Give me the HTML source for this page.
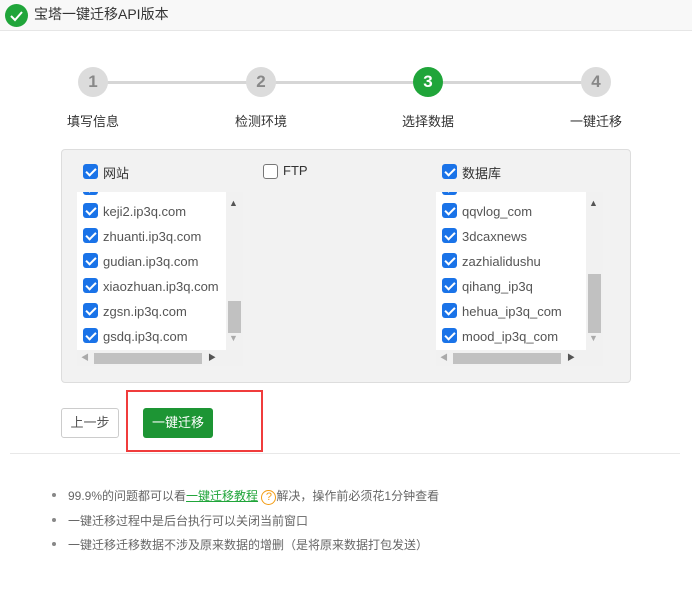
<!DOCTYPE html>
<html><head><meta charset="utf-8"><style>
*{margin:0;padding:0;box-sizing:border-box}
body{width:692px;height:590px;background:#fff;font-family:"Liberation Sans","Noto Sans CJK SC",sans-serif;position:relative;overflow:hidden;color:#333}
.a{position:absolute}
.hdr{left:0;top:0;width:692px;height:31px;background:#f8f8f8;border-bottom:1px solid #e6e6e6}
.circ{width:30px;height:30px;border-radius:50%;background:#dcdcdc;color:#888;font-weight:bold;font-size:17px;text-align:center;line-height:30px}
.lbl{font-size:13px;color:#333;top:111px;width:80px;text-align:center}
.cb{width:15px;height:15px;border-radius:3px;background:#1a73e8;}
.cb::after{content:"";position:absolute;left:4.5px;top:1.5px;width:4px;height:8px;border:solid #fff;border-width:0 2px 2px 0;transform:rotate(45deg)}
.cbe{width:15px;height:15px;border-radius:3px;border:1px solid #777;background:#fff}
.vs{background:#f1f1f1;width:17px}
.li{font-size:13px;color:#555}
.box{overflow:hidden}
</style></head><body>
<div class="a hdr"></div>
<div class="a" style="left:5px;top:4px;width:23px;height:23px;border-radius:50%;background:#20a53a"></div>
<svg class="a" style="left:5px;top:4px" width="23" height="23"><path d="M6 12l4 4 7-8" stroke="#fff" stroke-width="2" fill="none"/></svg>
<div class="a" style="left:34px;top:4px;font-size:14px;color:#333">宝塔一键迁移API版本</div>

<div class="a" style="left:93px;top:81px;width:503px;height:3px;background:#d6d6d6"></div>
<div class="a circ" style="left:78px;top:67px">1</div>
<div class="a circ" style="left:246px;top:67px">2</div>
<div class="a circ" style="left:413px;top:67px;background:#20a53a;color:#fff">3</div>
<div class="a circ" style="left:581px;top:67px">4</div>
<div class="a lbl" style="left:53px">填写信息</div>
<div class="a lbl" style="left:221px">检测环境</div>
<div class="a lbl" style="left:388px">选择数据</div>
<div class="a lbl" style="left:556px">一键迁移</div>

<div class="a" style="left:61px;top:149px;width:570px;height:234px;background:#f2f2f2;border:1px solid #ddd;border-radius:4px"></div>
<div class="a cb" style="left:83px;top:164px"></div><div class="a" style="left:103px;top:163px;font-size:13px">网站</div>
<div class="a cbe" style="left:263px;top:164px"></div><div class="a" style="left:283px;top:163px;font-size:13px">FTP</div>
<div class="a cb" style="left:442px;top:164px"></div><div class="a" style="left:462px;top:163px;font-size:13px">数据库</div>

<div class="a box" style="left:77px;top:192px;width:166px;height:174px;background:#fff">
 <div class="a cb" style="left:6px;top:-12px"></div>
 <div class="a vs" style="left:149px;top:0;height:158px"></div>
 <div class="a" style="left:151px;top:109px;width:13px;height:32px;background:#c1c1c1"></div>
 <div class="a" style="left:152px;top:6px;font-size:9px;color:#555">▲</div>
 <div class="a" style="left:152px;top:141px;font-size:9px;color:#aaa">▼</div>
 <div class="a" style="left:0;top:158px;width:166px;height:16px;background:#f1f1f1"></div>
 <div class="a" style="left:17px;top:161px;width:108px;height:11px;background:#c1c1c1"></div>
 <div class="a" style="left:4px;top:160px;font-size:8px;color:#aaa">◀</div>
 <div class="a" style="left:131px;top:160px;font-size:8px;color:#555">▶</div>
 <div class="a cb" style="left:6px;top:11px"></div><div class="a li" style="left:26px;top:12px">keji2.ip3q.com</div>
 <div class="a cb" style="left:6px;top:36px"></div><div class="a li" style="left:26px;top:37px">zhuanti.ip3q.com</div>
 <div class="a cb" style="left:6px;top:61px"></div><div class="a li" style="left:26px;top:62px">gudian.ip3q.com</div>
 <div class="a cb" style="left:6px;top:86px"></div><div class="a li" style="left:26px;top:87px">xiaozhuan.ip3q.com</div>
 <div class="a cb" style="left:6px;top:111px"></div><div class="a li" style="left:26px;top:112px">zgsn.ip3q.com</div>
 <div class="a cb" style="left:6px;top:136px"></div><div class="a li" style="left:26px;top:137px">gsdq.ip3q.com</div>
</div>

<div class="a box" style="left:436px;top:192px;width:167px;height:174px;background:#fff">
 <div class="a cb" style="left:6px;top:-12px"></div>
 <div class="a vs" style="left:150px;top:0;height:158px"></div>
 <div class="a" style="left:152px;top:82px;width:13px;height:59px;background:#c1c1c1"></div>
 <div class="a" style="left:153px;top:6px;font-size:9px;color:#555">▲</div>
 <div class="a" style="left:153px;top:141px;font-size:9px;color:#aaa">▼</div>
 <div class="a" style="left:0;top:158px;width:167px;height:16px;background:#f1f1f1"></div>
 <div class="a" style="left:17px;top:161px;width:108px;height:11px;background:#c1c1c1"></div>
 <div class="a" style="left:4px;top:160px;font-size:8px;color:#aaa">◀</div>
 <div class="a" style="left:131px;top:160px;font-size:8px;color:#555">▶</div>
 <div class="a cb" style="left:6px;top:11px"></div><div class="a li" style="left:26px;top:12px">qqvlog_com</div>
 <div class="a cb" style="left:6px;top:36px"></div><div class="a li" style="left:26px;top:37px">3dcaxnews</div>
 <div class="a cb" style="left:6px;top:61px"></div><div class="a li" style="left:26px;top:62px">zazhialidushu</div>
 <div class="a cb" style="left:6px;top:86px"></div><div class="a li" style="left:26px;top:87px">qihang_ip3q</div>
 <div class="a cb" style="left:6px;top:111px"></div><div class="a li" style="left:26px;top:112px">hehua_ip3q_com</div>
 <div class="a cb" style="left:6px;top:136px"></div><div class="a li" style="left:26px;top:137px">mood_ip3q_com</div>
</div>

<div class="a" style="left:61px;top:408px;width:58px;height:30px;border:1px solid #ccc;border-radius:3px;font-size:13px;color:#555;text-align:center;line-height:28px">上一步</div>
<div class="a" style="left:143px;top:408px;width:70px;height:30px;background:#1d9534;border-radius:3px;font-size:13px;color:#fff;text-align:center;line-height:30px">一键迁移</div>
<div class="a" style="left:126px;top:390px;width:137px;height:62px;border:2px solid #f03c3c"></div>
<div class="a" style="left:10px;top:453px;width:670px;height:1px;background:#e8e8e8"></div>

<div class="a" style="left:52px;top:493px;width:4px;height:4px;border-radius:50%;background:#888"></div>
<div class="a" style="left:52px;top:518px;width:4px;height:4px;border-radius:50%;background:#888"></div>
<div class="a" style="left:52px;top:542px;width:4px;height:4px;border-radius:50%;background:#888"></div>
<div class="a" style="left:68px;top:487px;font-size:12px;color:#666;white-space:nowrap">99.9%的问题都可以看<span style="color:#20a53a;text-decoration:underline">一键迁移教程</span> <span style="display:inline-block;width:15px;height:15px;border:1px solid #f39c12;border-radius:50%;color:#f39c12;font-size:11px;text-align:center;line-height:13px">?</span>解决，操作前必须花1分钟查看</div>
<div class="a" style="left:68px;top:512px;font-size:12px;color:#666">一键迁移过程中是后台执行可以关闭当前窗口</div>
<div class="a" style="left:68px;top:536px;font-size:12px;color:#666">一键迁移迁移数据不涉及原来数据的增删（是将原来数据打包发送）</div>
</body></html>
